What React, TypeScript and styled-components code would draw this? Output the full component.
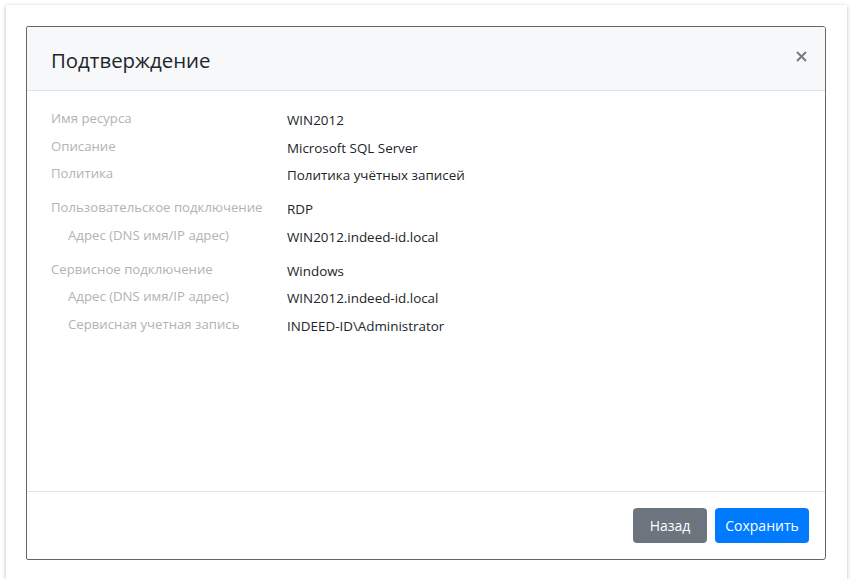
import React from "react";
import styled, { createGlobalStyle } from "styled-components";

const Global = createGlobalStyle`
  html, body { margin: 0; padding: 0; background: #ffffff; }
  body { font-family: "Open Sans", "Noto Sans", Arial, sans-serif; }
  * { box-sizing: border-box; }
`;

const Frame = styled.div`
  margin: 5px 0 0 6px;
  width: 841px;
  height: 574px;
  background: #ffffff;
  box-shadow: 0 1px 4px rgba(0, 0, 0, 0.28);
  padding: 21px 0 0 20px;
`;

const Modal = styled.div`
  width: 800px;
  height: 534px;
  border: 1px solid #666666;
  border-radius: 2px 3px 3px 2px;
  display: flex;
  flex-direction: column;
  overflow: hidden;
  background: #ffffff;
`;

const Header = styled.div`
  height: 64px;
  flex: none;
  background: #f7f8fa;
  border-bottom: 1px solid #dee2e6;
  display: flex;
  align-items: center;
  justify-content: space-between;
  padding: 0 18px 0 24px;
`;

const Title = styled.h5`
  margin: 0;
  font-size: 20.4px;
  font-weight: 400;
  color: #212529;
  line-height: 24px;
  padding-top: 2px;
`;

const Close = styled.button`
  border: none;
  background: transparent;
  padding: 0;
  width: 12px;
  height: 12px;
  display: flex;
  align-items: center;
  justify-content: center;
  margin-top: -5px;
  cursor: pointer;
`;

const Body = styled.div`
  flex: 1;
  padding: 15px 24px 0 24px;
`;

const Group = styled.div`
  & + & { margin-top: 6.5px; }
`;

const Row = styled.div`
  display: grid;
  grid-template-columns: 236px 1fr;
  align-items: start;
  height: 27.5px;
`;

const Label = styled.div<{ $indent?: boolean }>`
  font-size: 13.2px;
  line-height: 24px;
  color: #b3b3b3;
  padding-left: ${(p) => (p.$indent ? "17px" : "0")};
  white-space: nowrap;
`;

const Value = styled.div`
  font-size: 13.4px;
  line-height: 28px;
  color: #212529;
  white-space: nowrap;
`;

const Footer = styled.div`
  height: 68px;
  flex: none;
  border-top: 1px solid #dee2e6;
  display: flex;
  align-items: center;
  justify-content: flex-end;
  gap: 8px;
  padding: 0 16px 0 0;
`;

const Button = styled.button<{ $primary?: boolean; $w: number }>`
  width: ${(p) => p.$w}px;
  height: 35px;
  border: none;
  border-radius: 4px;
  background: ${(p) => (p.$primary ? "#007bff" : "#6c757d")};
  color: #ffffff;
  font-family: inherit;
  font-size: 14px;
  padding: 0;
  cursor: pointer;
`;

type Item = { label: string; value: string; indent?: boolean };

const groups: Item[][] = [
  [
    { label: "Имя ресурса", value: "WIN2012" },
    { label: "Описание", value: "Microsoft SQL Server" },
    { label: "Политика", value: "Политика учётных записей" },
  ],
  [
    { label: "Пользовательское подключение", value: "RDP" },
    { label: "Адрес (DNS имя/IP адрес)", value: "WIN2012.indeed-id.local", indent: true },
  ],
  [
    { label: "Сервисное подключение", value: "Windows" },
    { label: "Адрес (DNS имя/IP адрес)", value: "WIN2012.indeed-id.local", indent: true },
    { label: "Сервисная учетная запись", value: "INDEED-ID\\Administrator", indent: true },
  ],
];

export default function App() {
  return (
    <>
      <Global />
      <Frame>
        <Modal>
          <Header>
            <Title>Подтверждение</Title>
            <Close aria-label="Закрыть">
              <svg width="11" height="11" viewBox="0 0 11 11">
                <path d="M1 1 L10 10 M10 1 L1 10" stroke="#7b7b7b" strokeWidth="2" />
              </svg>
            </Close>
          </Header>
          <Body>
            {groups.map((g, gi) => (
              <Group key={gi}>
                {g.map((it, i) => (
                  <Row key={i}>
                    <Label $indent={it.indent}>{it.label}</Label>
                    <Value>{it.value}</Value>
                  </Row>
                ))}
              </Group>
            ))}
          </Body>
          <Footer>
            <Button $w={74}>Назад</Button>
            <Button $w={94} $primary>
              Сохранить
            </Button>
          </Footer>
        </Modal>
      </Frame>
    </>
  );
}
